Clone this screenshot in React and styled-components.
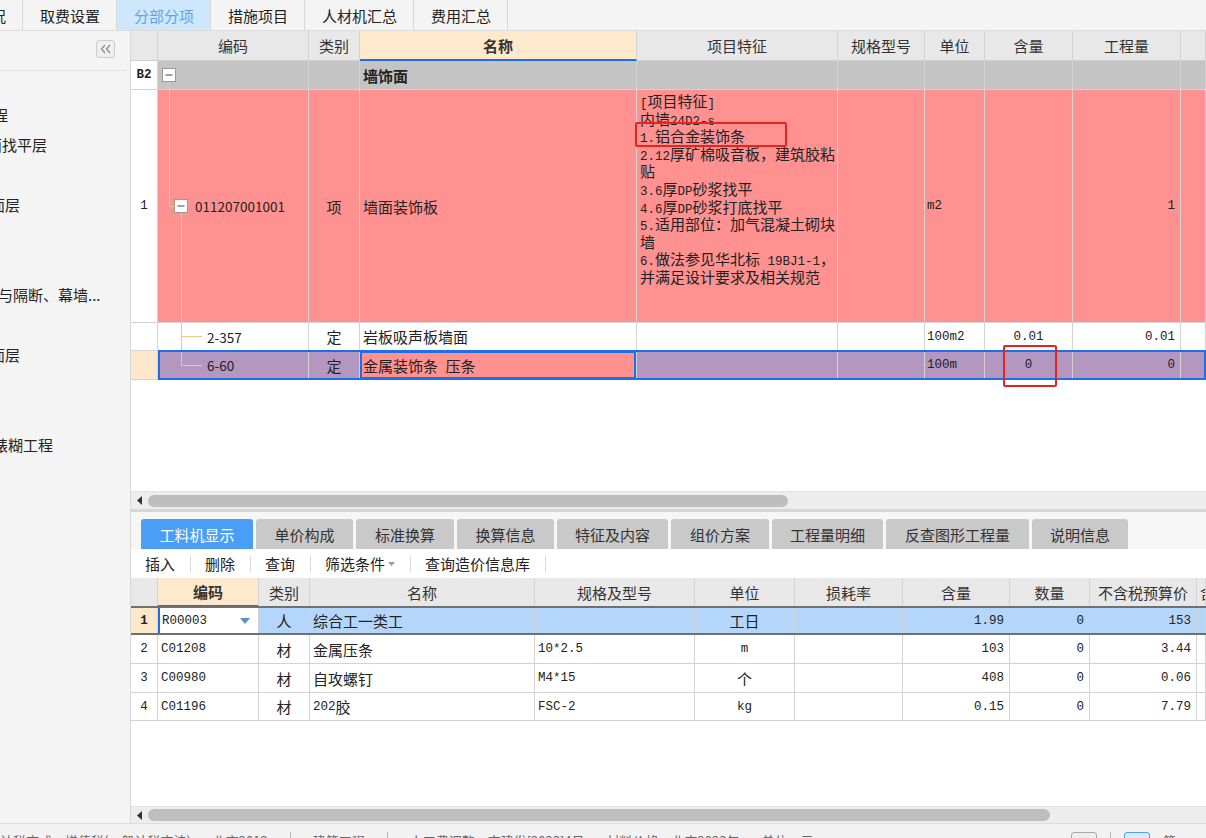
import React from "react";
import styled, { createGlobalStyle } from "styled-components";

const SANS = `"Noto Sans CJK SC", "Microsoft YaHei", sans-serif`;

const UP_COLS = "27px 151px 51px 277px 201px 87px 60px 88px 108px 1fr";
const LOW_COLS = "27px 101px 51px 225px 160px 100px 108px 107px 80px 107px 1fr";

const GlobalStyle = createGlobalStyle`
  html, body { margin: 0; padding: 0; background: #f4f4f4; }
  body { font-family: ${SANS}; font-size: 15px; color: #222; overflow: hidden; }
  * { box-sizing: border-box; }
`;

// ascii runs look like SimSun half-width, the rest like the UI font
const Latin = styled.span`
    font-family: "Liberation Mono", monospace;
    font-size: 12.5px;
`;
const Han = styled.span`
    font-family: ${SANS};
    font-size: 15px;
`;
const Mixed = ({ text }) =>
    text
        .split(/([\x20-\x7e]+)/)
        .filter(Boolean)
        .map((s, i) =>
            /^[\x20-\x7e]+$/.test(s) ? <Latin key={i}>{s}</Latin> : <Han key={i}>{s}</Han>
        );

const topTabs = [
    { name: "工程概况", first: true },
    { name: "取费设置" },
    { name: "分部分项", active: true },
    { name: "措施项目" },
    { name: "人材机汇总" },
    { name: "费用汇总" },
];

const sideItems = [
    { text: "程", shift: -7 },
    { text: "面找平层", shift: -13 },
    null,
    { text: "面层", shift: -10 },
    null,
    null,
    { text: "与隔断、幕墙...", shift: -2 },
    null,
    { text: "面层", shift: -10 },
    null,
    null,
    { text: "裱糊工程", shift: -7 },
];

const featureLines = [
    "[项目特征]",
    "内墙24D2-s",
    "1.铝合金装饰条",
    "2.12厚矿棉吸音板，建筑胶粘",
    "贴",
    "3.6厚DP砂浆找平",
    "4.6厚DP砂浆打底找平",
    "5.适用部位：加气混凝土砌块",
    "墙",
    "6.做法参见华北标 19BJ1-1，",
    "并满足设计要求及相关规范",
];

const detailTabs = [
    { name: "工料机显示", w: 112, active: true },
    { name: "单价构成", w: 97 },
    { name: "标准换算", w: 98 },
    { name: "换算信息", w: 97 },
    { name: "特征及内容", w: 111 },
    { name: "组价方案", w: 98 },
    { name: "工程量明细", w: 111 },
    { name: "反查图形工程量", w: 143 },
    { name: "说明信息", w: 96 },
];

const tools = ["插入", "删除", "查询", "筛选条件", "查询造价信息库"];

const materials = [
    { no: "2", code: "C01208", type: "材", name: "金属压条", spec: "10*2.5", unit: "m", qty: "103", num: "0", price: "3.44" },
    { no: "3", code: "C00980", type: "材", name: "自攻螺钉", spec: "M4*15", unit: "个", qty: "408", num: "0", price: "0.06" },
    { no: "4", code: "C01196", type: "材", name: "202胶", spec: "FSC-2", unit: "kg", qty: "0.15", num: "0", price: "7.79" },
];

function TreeGlyph({ kind, h }) {
    const mid = Math.floor(h / 2) + 0.5;
    const line = "#f5c48c";
    if (kind === "group") {
        const y = Math.round(h / 2) - 7;
        return (
            <svg width="20" height={h}>
                <line x1="11.5" y1={y + 14} x2="11.5" y2={h} stroke={line} />
                <rect x="4.5" y={y + 0.5} width="13" height="13" fill="#fff" stroke="#9a9a9a" />
                <line x1="7.5" y1={y + 7} x2="14.5" y2={y + 7} stroke="#444" />
            </svg>
        );
    }
    if (kind === "item") {
        return (
            <svg width="37" height={h}>
                <line x1="11.5" y1="0" x2="11.5" y2={mid} stroke={line} />
                <line x1="11.5" y1={mid} x2="16" y2={mid} stroke={line} />
                <line x1="23.5" y1={mid + 7} x2="23.5" y2={h} stroke={line} />
                <rect x="16.5" y={mid - 7} width="13" height="13" fill="#fff" stroke="#9a9a9a" />
                <line x1="19.5" y1={mid - 0.5} x2="26.5" y2={mid - 0.5} stroke="#444" />
            </svg>
        );
    }
    return (
        <svg width="49" height={h}>
            <line x1="23.5" y1="0" x2="23.5" y2={kind === "leafEnd" ? mid : h} stroke={line} />
            <line x1="23.5" y1={mid} x2="44" y2={mid} stroke={line} />
        </svg>
    );
}

export default function App() {
    return (
        <>
            <GlobalStyle />
            <Root>
                <TopTabs>
                    {topTabs.map((t) => (
                        <TopTab key={t.name} $active={t.active} $first={t.first}>
                            {t.name}
                        </TopTab>
                    ))}
                    <TopTabRest />
                </TopTabs>

                <Body>
                    <Sidebar>
                        <SideHead>
                            <CollapseBtn>
                                <svg width="12" height="10" viewBox="0 0 12 10">
                                    <path d="M5 1 L1.5 5 L5 9 M10 1 L6.5 5 L10 9" fill="none" stroke="#8a8a8a" strokeWidth="1.2" />
                                </svg>
                            </CollapseBtn>
                        </SideHead>
                        <SideTree>
                            {sideItems.map((it, i) => (
                                <SideRow key={i}>{it && <SideLabel $shift={it.shift}>{it.text}</SideLabel>}</SideRow>
                            ))}
                        </SideTree>
                    </Sidebar>

                    <Main>
                        <UpperGrid>
                            <Row $cols={UP_COLS} $h={30}>
                                <HeadCell />
                                <HeadCell>编码</HeadCell>
                                <HeadCell>类别</HeadCell>
                                <HeadCell $active>名称</HeadCell>
                                <HeadCell>项目特征</HeadCell>
                                <HeadCell>规格型号</HeadCell>
                                <HeadCell>单位</HeadCell>
                                <HeadCell>含量</HeadCell>
                                <HeadCell>工程量</HeadCell>
                                <HeadCell />
                            </Row>

                            <Row $cols={UP_COLS} $h={29}>
                                <NumCell $bold>
                                    <Latin>B2</Latin>
                                </NumCell>
                                <TreeCell $bg="#c4c4c4">
                                    <TreeGlyph kind="group" h={28} />
                                </TreeCell>
                                <Cell $bg="#c4c4c4" />
                                <Cell $bg="#c4c4c4" $bold>
                                    墙饰面
                                </Cell>
                                {Array.from({ length: 6 }).map((_, i) => (
                                    <Cell key={i} $bg="#c4c4c4" />
                                ))}
                            </Row>

                            <Row $cols={UP_COLS} $h={233}>
                                <NumCell>
                                    <Latin>1</Latin>
                                </NumCell>
                                <TreeCell $bg="#ff9191">
                                    <TreeGlyph kind="item" h={232} />
                                    <Code>011207001001</Code>
                                </TreeCell>
                                <Cell $bg="#ff9191" $align="center">
                                    项
                                </Cell>
                                <Cell $bg="#ff9191">墙面装饰板</Cell>
                                <FeatureCell $bg="#ff9191">
                                    {featureLines.map((l) => (
                                        <FeatureLine key={l}>
                                            <Mixed text={l} />
                                        </FeatureLine>
                                    ))}
                                </FeatureCell>
                                <Cell $bg="#ff9191" />
                                <Cell $bg="#ff9191" $pad="2px">
                                    <Latin>m2</Latin>
                                </Cell>
                                <Cell $bg="#ff9191" />
                                <Cell $bg="#ff9191" $align="right">
                                    <Latin>1</Latin>
                                </Cell>
                                <Cell $bg="#ff9191" />
                            </Row>

                            <Row $cols={UP_COLS} $h={28}>
                                <NumCell />
                                <TreeCell>
                                    <TreeGlyph kind="leaf" h={27} />
                                    <Code>2-357</Code>
                                </TreeCell>
                                <Cell $align="center">定</Cell>
                                <Cell>岩板吸声板墙面</Cell>
                                <Cell />
                                <Cell />
                                <Cell $pad="2px">
                                    <Latin>100m2</Latin>
                                </Cell>
                                <Cell $align="center">
                                    <Latin>0.01</Latin>
                                </Cell>
                                <Cell $align="right">
                                    <Latin>0.01</Latin>
                                </Cell>
                                <Cell />
                            </Row>

                            <Row $cols={UP_COLS} $h={29}>
                                <NumCell $bg="#fde8cc" />
                                <TreeCell $bg="#b497c0">
                                    <TreeGlyph kind="leafEnd" h={28} />
                                    <Code>6-60</Code>
                                </TreeCell>
                                <Cell $bg="#b497c0" $align="center">
                                    定
                                </Cell>
                                <Cell $bg="#ff9191" $focus>
                                    金属装饰条{"\u2002"}压条
                                </Cell>
                                <Cell $bg="#b497c0" />
                                <Cell $bg="#b497c0" />
                                <Cell $bg="#b497c0" $pad="2px">
                                    <Latin>100m</Latin>
                                </Cell>
                                <Cell $bg="#b497c0" $align="center">
                                    <Latin>0</Latin>
                                </Cell>
                                <Cell $bg="#b497c0" $align="right">
                                    <Latin>0</Latin>
                                </Cell>
                                <Cell $bg="#b497c0" />
                                <RowSelect $color="#1c6fe6" $all />
                            </Row>
                        </UpperGrid>

                        <ScrollTrack $h={18}>
                            <ScrollArrow>
                                <svg width="5" height="9">
                                    <path d="M5 0 L0 4.5 L5 9 Z" fill="#333" />
                                </svg>
                            </ScrollArrow>
                            <ScrollThumb $w={640} />
                        </ScrollTrack>
                        <Splitter />

                        <DetailTabs>
                            {detailTabs.map((t) => (
                                <DetailTab key={t.name} $w={t.w} $active={t.active}>
                                    {t.name}
                                </DetailTab>
                            ))}
                        </DetailTabs>

                        <Toolbar>
                            {tools.map((t) => (
                                <React.Fragment key={t}>
                                    <ToolItem>
                                        {t}
                                        {t === "筛选条件" && (
                                            <svg width="7" height="4" style={{ marginLeft: 3 }}>
                                                <path d="M0 0 L7 0 L3.5 4 Z" fill="#999" />
                                            </svg>
                                        )}
                                    </ToolItem>
                                    <ToolSep />
                                </React.Fragment>
                            ))}
                        </Toolbar>

                        <LowerGrid>
                            <Row $cols={LOW_COLS} $h={29}>
                                <HeadCell />
                                <HeadCell $active>编码</HeadCell>
                                <HeadCell>类别</HeadCell>
                                <HeadCell>名称</HeadCell>
                                <HeadCell>规格及型号</HeadCell>
                                <HeadCell>单位</HeadCell>
                                <HeadCell>损耗率</HeadCell>
                                <HeadCell>含量</HeadCell>
                                <HeadCell>数量</HeadCell>
                                <HeadCell>不含税预算价</HeadCell>
                                <HeadCell $clip>含税市场价</HeadCell>
                            </Row>

                            <Row $cols={LOW_COLS} $h={28}>
                                <NumCell $bg="#fde8cc" $bold>
                                    <Latin>1</Latin>
                                </NumCell>
                                <EditorCell>
                                    <Latin>R00003</Latin>
                                    <svg width="10" height="6">
                                        <path d="M0 0 L10 0 L5 6 Z" fill="#5b8fd3" />
                                    </svg>
                                </EditorCell>
                                <Cell $bg="#b5d6fb" $align="center">
                                    人
                                </Cell>
                                <Cell $bg="#b5d6fb">综合工一类工</Cell>
                                <Cell $bg="#b5d6fb" />
                                <Cell $bg="#b5d6fb" $align="center">
                                    工日
                                </Cell>
                                <Cell $bg="#b5d6fb" />
                                <Cell $bg="#b5d6fb" $align="right">
                                    <Latin>1.99</Latin>
                                </Cell>
                                <Cell $bg="#b5d6fb" $align="right">
                                    <Latin>0</Latin>
                                </Cell>
                                <Cell $bg="#b5d6fb" $align="right">
                                    <Latin>153</Latin>
                                </Cell>
                                <Cell $bg="#b5d6fb" />
                                <RowSelect $color="#707070" />
                            </Row>

                            {materials.map((m, i) => (
                                <Row key={m.code} $cols={LOW_COLS} $h={i === 2 ? 28 : 29}>
                                    <NumCell>
                                        <Latin>{m.no}</Latin>
                                    </NumCell>
                                    <Cell>
                                        <Latin>{m.code}</Latin>
                                    </Cell>
                                    <Cell $align="center">{m.type}</Cell>
                                    <Cell>
                                        <Mixed text={m.name} />
                                    </Cell>
                                    <Cell>
                                        <Latin>{m.spec}</Latin>
                                    </Cell>
                                    <Cell $align="center">
                                        <Mixed text={m.unit} />
                                    </Cell>
                                    <Cell />
                                    <Cell $align="right">
                                        <Latin>{m.qty}</Latin>
                                    </Cell>
                                    <Cell $align="right">
                                        <Latin>{m.num}</Latin>
                                    </Cell>
                                    <Cell $align="right">
                                        <Latin>{m.price}</Latin>
                                    </Cell>
                                    <Cell />
                                </Row>
                            ))}
                        </LowerGrid>

                        <ScrollTrack $h={17}>
                            <ScrollArrow>
                                <svg width="5" height="9">
                                    <path d="M5 0 L0 4.5 L5 9 Z" fill="#333" />
                                </svg>
                            </ScrollArrow>
                            <ScrollThumb $w={902} />
                        </ScrollTrack>
                    </Main>
                </Body>

                <StatusBar>
                    <StatusText>计税方式：增值税(一般计税方法)</StatusText>
                    <StatusText>北京2012</StatusText>
                    <StatusSep />
                    <StatusText>建筑工程</StatusText>
                    <StatusSep />
                    <StatusText>人工费调整：京建发[2023]4号</StatusText>
                    <StatusText>材料价格：北京2023年</StatusText>
                    <StatusText>单位：元</StatusText>
                    <StatusIcons>
                        <StatusBox />
                        <StatusSep />
                        <StatusBox $blue />
                        <StatusText>简</StatusText>
                    </StatusIcons>
                </StatusBar>

                <Mark $x={635} $y={122} $w={152} $h={25} />
                <Mark $x={1003} $y={345} $w={54} $h={42} />
            </Root>
        </>
    );
}

const Root = styled.div`
    position: relative;
    width: 1206px;
    height: 838px;
    overflow: hidden;
    display: flex;
    flex-direction: column;
    background: #f4f4f4;
`;

const TopTabs = styled.div`
    display: flex;
    height: 31px;
    flex-shrink: 0;
    border-bottom: 1px solid #dcdcdc;
    background: #f4f4f4;
    overflow: hidden;
`;
const TopTab = styled.div`
    flex-shrink: 0;
    display: flex;
    align-items: center;
    padding: 0 16px 0 17px;
    margin-left: ${(p) => (p.$first ? "-71px" : "0")};
    border-right: 1px solid #d8d8d8;
    background: ${(p) => (p.$active ? "#cfe7fd" : "#f4f4f4")};
    color: ${(p) => (p.$active ? "#5da2ea" : "#222")};
    font-size: 15px;
    white-space: nowrap;
`;
const TopTabRest = styled.div`
    flex: 1;
`;

const Body = styled.div`
    display: flex;
    height: 792px;
    flex-shrink: 0;
`;

const Sidebar = styled.div`
    width: 131px;
    flex-shrink: 0;
    background: #f4f4f4;
    border-right: 1px solid #d9d9d9;
    overflow: hidden;
`;
const SideHead = styled.div`
    height: 40px;
    margin-right: 4px;
    border-bottom: 1px solid #e2e2e2;
    display: flex;
    justify-content: flex-end;
    align-items: flex-start;
    padding: 9px 11px 0 0;
`;
const CollapseBtn = styled.div`
    width: 19px;
    height: 18px;
    border: 1px solid #cdcdcd;
    border-radius: 3px;
    background: #efefef;
    display: flex;
    align-items: center;
    justify-content: center;
`;
const SideTree = styled.div`
    margin-top: 28px;
`;
const SideRow = styled.div`
    height: 30px;
    display: flex;
    align-items: center;
    white-space: nowrap;
    overflow: hidden;
    font-size: 15px;
    color: #222;
`;
const SideLabel = styled.span`
    margin-left: ${(p) => p.$shift}px;
`;

const Main = styled.div`
    flex: 1;
    display: flex;
    flex-direction: column;
    min-width: 0;
`;

const UpperGrid = styled.div`
    height: 460px;
    background: #fff;
    overflow: hidden;
`;
const LowerGrid = styled.div`
    flex: 1;
    background: #fff;
    overflow: hidden;
`;

const Row = styled.div`
    position: relative;
    display: grid;
    grid-template-columns: ${(p) => p.$cols};
    height: ${(p) => p.$h}px;
`;

const Cell = styled.div`
    display: flex;
    align-items: center;
    justify-content: ${(p) =>
        p.$align === "center" ? "center" : p.$align === "right" ? "flex-end" : "flex-start"};
    padding: ${(p) => (p.$align === "right" ? "0 5px 0 3px" : `0 3px 0 ${p.$pad || "3px"}`)};
    background: ${(p) => p.$bg || "#fff"};
    border-right: 1px solid #d3d3d3;
    border-bottom: 1px solid #d3d3d3;
    box-shadow: ${(p) => (p.$focus ? "inset 0 0 0 2px #1c6fe6" : "none")};
    font-size: 15px;
    font-weight: ${(p) => (p.$bold ? 700 : 400)};
    color: #222;
    white-space: nowrap;
    overflow: hidden;
    min-width: 0;
`;
const NumCell = styled(Cell)`
    justify-content: center;
    padding: 0;
    background: ${(p) => p.$bg || "#fff"};
`;
const TreeCell = styled(Cell)`
    padding: 0;
    align-items: stretch;
`;
const Code = styled.span`
    align-self: center;
    font-size: 13.5px;
    color: #222;
`;
const FeatureCell = styled(Cell)`
    display: block;
    padding: 2px 2px 0 3px;
`;
const FeatureLine = styled.div`
    height: 17.6px;
    white-space: pre;
    line-height: 17.6px;
    overflow: visible;
`;

const HeadCell = styled(Cell)`
    justify-content: ${(p) => (p.$clip ? "flex-start" : "center")};
    background: ${(p) => (p.$active ? "#ffe9cc" : "#e8e8e8")};
    border-bottom: ${(p) => (p.$active ? "2px solid #1c6fe6" : "1px solid #d0d0d0")};
    font-weight: ${(p) => (p.$active ? 700 : 400)};
    color: #333;
`;
const EditorCell = styled(Cell)`
    justify-content: space-between;
    padding: 0 8px 0 2px;
    background: #fff;
    border-left: 2px solid #1c6fe6;
`;
const RowSelect = styled.div`
    position: absolute;
    left: ${(p) => (p.$all ? "27px" : "0")};
    right: 0;
    top: -1px;
    bottom: 0;
    pointer-events: none;
    border: 2px solid ${(p) => p.$color};
    border-left-width: ${(p) => (p.$all ? "2px" : "0")};
    border-right-width: ${(p) => (p.$all ? "2px" : "0")};
`;

const ScrollTrack = styled.div`
    height: ${(p) => p.$h}px;
    flex-shrink: 0;
    display: flex;
    align-items: center;
    gap: 6px;
    padding-left: 6px;
    background: #ededed;
    border-top: 1px solid #e2e2e2;
`;
const ScrollArrow = styled.div`
    display: flex;
    align-items: center;
`;
const ScrollThumb = styled.div`
    width: ${(p) => p.$w}px;
    height: 12px;
    border-radius: 6px;
    background: #bebebe;
`;
const Splitter = styled.div`
    height: 3px;
    flex-shrink: 0;
    background: #d6d6d6;
`;

const DetailTabs = styled.div`
    height: 37px;
    flex-shrink: 0;
    display: flex;
    align-items: flex-end;
    gap: 3px;
    padding-left: 10px;
    background: #f6f6f6;
`;
const DetailTab = styled.div`
    width: ${(p) => p.$w}px;
    height: 30px;
    display: flex;
    align-items: center;
    justify-content: center;
    border-radius: 3px 3px 0 0;
    background: ${(p) => (p.$active ? "#4a9ef5" : "#c9c9c9")};
    color: ${(p) => (p.$active ? "#fff" : "#333")};
    font-size: 15px;
`;

const Toolbar = styled.div`
    height: 29px;
    flex-shrink: 0;
    display: flex;
    align-items: center;
    background: #fff;
`;
const ToolItem = styled.div`
    display: flex;
    align-items: center;
    padding: 0 15px 0 14px;
    font-size: 15px;
    color: #222;
    white-space: nowrap;
`;
const ToolSep = styled.span`
    width: 1px;
    height: 16px;
    background: #dadada;
`;

const StatusBar = styled.div`
    height: 28px;
    flex-shrink: 0;
    display: flex;
    align-items: flex-start;
    gap: 22px;
    padding: 8px 0 0 0;
    background: #f2f2f2;
    border-top: 1px solid #dedede;
    overflow: hidden;
`;
const StatusText = styled.span`
    font-size: 13px;
    color: #666;
    white-space: nowrap;
    line-height: 18px;
`;
const StatusSep = styled.span`
    width: 1px;
    height: 18px;
    background: #b8b8b8;
`;
const StatusIcons = styled.div`
    margin-left: auto;
    display: flex;
    align-items: flex-start;
    gap: 13px;
    padding-right: 30px;
`;
const StatusBox = styled.span`
    width: 26px;
    height: 20px;
    border: 1px solid ${(p) => (p.$blue ? "#4a9ef5" : "#aaa")};
    border-radius: 3px;
    background: ${(p) => (p.$blue ? "#d8eafd" : "#eee")};
`;

const Mark = styled.div`
    position: absolute;
    left: ${(p) => p.$x}px;
    top: ${(p) => p.$y}px;
    width: ${(p) => p.$w}px;
    height: ${(p) => p.$h}px;
    border: 2px solid #e8221c;
    border-radius: 2px;
    pointer-events: none;
`;
